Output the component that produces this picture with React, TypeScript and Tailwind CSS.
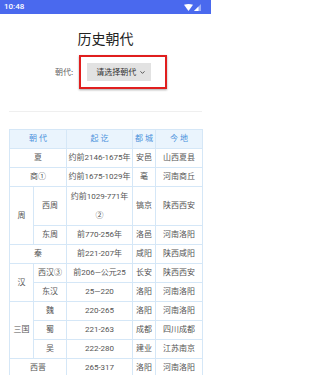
import { ChevronDown } from "lucide-react";

type Row = {
  a?: { text: string; rowSpan?: number; colSpan?: number };
  b?: string;
  period: React.ReactNode;
  capital: string;
  place: string;
  tall?: boolean;
};

const rows: Row[] = [
  { a: { text: "夏", colSpan: 2 }, period: "约前2146-1675年", capital: "安邑", place: "山西夏县" },
  { a: { text: "商①", colSpan: 2 }, period: "约前1675-1029年", capital: "亳", place: "河南商丘" },
  {
    a: { text: "周", rowSpan: 2 },
    b: "西周",
    period: (
      <>
        约前1029-771年
        <br />②
      </>
    ),
    capital: "镐京",
    place: "陕西西安",
    tall: true,
  },
  { b: "东周", period: "前770-256年", capital: "洛邑", place: "河南洛阳" },
  { a: { text: "秦", colSpan: 2 }, period: "前221-207年", capital: "咸阳", place: "陕西咸阳" },
  { a: { text: "汉", rowSpan: 2 }, b: "西汉③", period: "前206—公元25", capital: "长安", place: "陕西西安" },
  { b: "东汉", period: "25—220", capital: "洛阳", place: "河南洛阳" },
  { a: { text: "三国", rowSpan: 3 }, b: "魏", period: "220-265", capital: "洛阳", place: "河南洛阳" },
  { b: "蜀", period: "221-263", capital: "成都", place: "四川成都" },
  { b: "吴", period: "222-280", capital: "建业", place: "江苏南京" },
  { a: { text: "西晋", colSpan: 2 }, period: "265-317", capital: "洛阳", place: "河南洛阳" },
];

const cell = "border border-[#d5e7f7] text-center align-middle p-0 leading-[18px] whitespace-nowrap";

export default function App() {
  return (
    <div className="w-[211px] h-[375px] overflow-hidden bg-white font-['Roboto','Noto_Sans_CJK_SC',sans-serif]">
      {/* status bar */}
      <div className="h-[14px] bg-[#4a69ee] flex items-center justify-between px-[4px] text-white">
        <span className="text-[8px] leading-none font-medium">10:48</span>
        <div className="flex items-center gap-[1px] pr-[6px]">
          <svg width="9" height="7" viewBox="0 0 9 7">
            <path d="M0 0.8 Q4.5 -0.8 9 0.8 L4.5 7 Z" fill="white" />
          </svg>
          <svg width="7" height="7" viewBox="0 0 7 7">
            <path d="M7 0 L7 7 L0 7 Z" fill="white" fillOpacity="0.45" />
            <path d="M4.5 2.5 L4.5 7 L0 7 Z" fill="white" />
          </svg>
        </div>
      </div>

      {/* title */}
      <h1 className="mt-[14px] text-center text-[14px] leading-[20px] text-[#222] font-['Noto_Sans_CJK_SC',sans-serif]">
        历史朝代
      </h1>

      {/* selector */}
      <div className="mt-[7px] flex items-center pl-[55px]">
        <span className="text-[8px] text-[#666] mr-[6px] font-['Noto_Sans_CJK_SC',sans-serif]">朝代:</span>
        <div className="w-[88px] h-[34px] border-2 border-[#e01e1e] shadow-[0_1px_2px_rgba(0,0,0,0.35)] pl-[6px] pt-[6px]">
          <div className="w-[64px] h-[18px] bg-[#e2e2e2] flex items-center justify-between pl-[9px] pr-[5px]">
            <span className="text-[8px] text-[#333] leading-none font-['Noto_Sans_CJK_SC',sans-serif]">请选择朝代</span>
            <ChevronDown size={7} strokeWidth={3} className="text-[#444]" />
          </div>
        </div>
      </div>

      <div className="mx-[9px] mt-[22px] h-[1px] bg-[#efefef]" />

      {/* table */}
      <table className="mx-[9px] mt-[17px] w-[193px] border-collapse table-fixed text-[8px] text-[#555]">
        <colgroup>
          <col className="w-[24px]" />
          <col className="w-[33px]" />
          <col className="w-[66px]" />
          <col className="w-[23px]" />
          <col className="w-[47px]" />
        </colgroup>
        <thead>
          <tr className="bg-[#eaf4fd] text-[#4a92dc]">
            <th colSpan={2} className={cell + " font-normal"}>朝 代</th>
            <th className={cell + " font-normal"}>起 讫</th>
            <th className={cell + " font-normal"}>都 城</th>
            <th className={cell + " font-normal"}>今 地</th>
          </tr>
        </thead>
        <tbody>
          {rows.map((r, i) => (
            <tr key={i} className={r.tall ? "h-[38px]" : "h-[19px]"}>
              {r.a && (
                <td rowSpan={r.a.rowSpan} colSpan={r.a.colSpan} className={cell}>
                  {r.a.text}
                </td>
              )}
              {r.b && <td className={cell}>{r.b}</td>}
              <td className={cell + (r.tall ? " leading-[19px]" : "")}>{r.period}</td>
              <td className={cell}>{r.capital}</td>
              <td className={cell}>{r.place}</td>
            </tr>
          ))}
        </tbody>
      </table>
    </div>
  );
}
